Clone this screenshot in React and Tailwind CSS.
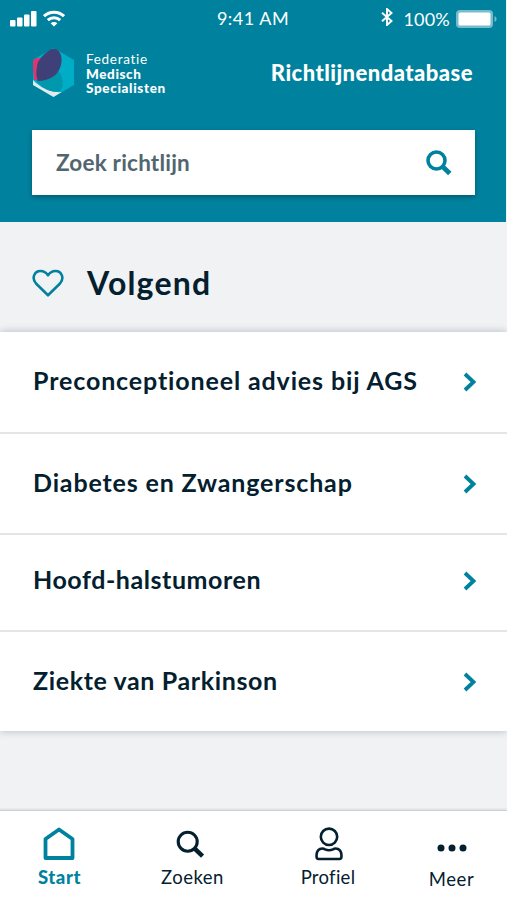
const guidelines = [
  { title: "Preconceptioneel advies bij AGS", row: "h-[102px]", label: "tracking-[0.87px]" },
  { title: "Diabetes en Zwangerschap", row: "h-[101px]", label: "tracking-[0.85px]" },
  { title: "Hoofd-halstumoren", row: "h-[97px] pb-[3px]", label: "tracking-[0.56px]" },
  { title: "Ziekte van Parkinson", row: "h-[99px]", label: "tracking-[0.62px]" },
];

function StatusBar() {
  return (
    <div className="grid h-[38px] grid-cols-[170px_1fr_170px] items-center text-[18px] leading-none text-white">
      <div className="flex items-center gap-[6px] pb-px pl-[10px]">
        <svg width="27" height="17" viewBox="0 0 27 17" fill="#fff">
          <rect x="0" y="10" width="5.5" height="6.5" rx="1" />
          <rect x="7" y="7.5" width="5.5" height="9" rx="1" />
          <rect x="14" y="4.5" width="5.5" height="12" rx="1" />
          <rect x="21" y="1" width="5.5" height="15.5" rx="1" />
        </svg>
        <svg width="22" height="17" viewBox="0 0 22 17" fill="none" stroke="#fff" strokeWidth="3">
          <path d="M1 6.2C6.6 .8 15.4 .8 21 6.2" />
          <path d="M4.8 10.2C8.4 6.9 13.6 6.9 17.2 10.2" />
          <path d="M11 16.5L7.6 13.2C9.5 11.5 12.5 11.5 14.4 13.2Z" fill="#fff" stroke="none" />
        </svg>
      </div>
      <div className="pb-[2px] text-center tracking-[0.5px] whitespace-nowrap">9:41 AM</div>
      <div className="flex items-center justify-end pr-[9px]">
        <svg width="12" height="18" viewBox="0 0 12 18" fill="none" stroke="#fff" strokeWidth="1.9" className="mb-1">
          <path d="M1 4.8L10.5 13L6 17V1L10.5 5L1 13.2" />
        </svg>
        <span className="ml-[10px] tracking-[0.2px]">100%</span>
        <svg width="41" height="18" viewBox="0 0 41 18" className="ml-[6px]">
          <rect x="0" y="0" width="37" height="18" rx="4" fill="#77bccb" />
          <rect x="2.5" y="2.5" width="32" height="13" rx="1.5" fill="#fff" />
          <path d="M38.5 6C41.3 7.5 41.3 10.5 38.5 12Z" fill="#77bccb" />
        </svg>
      </div>
    </div>
  );
}

function Logo() {
  return (
    <div className="flex items-center">
      <svg width="43" height="50" viewBox="0 0 43 50">
        <defs>
          <clipPath id="hexagon">
            <path d="M21.5 0L42 12V37L21.5 49L1 37V12Z" />
          </clipPath>
        </defs>
        <g clipPath="url(#hexagon)">
          <rect width="43" height="50" fill="#00adc7" />
          <path d="M0 31C8 40 19 45 30 44L21 50H0Z" fill="#e3e9ed" />
          <path d="M3 31C9 40 20 46 28 43C34 37 30 25 23 20Z" fill="#0098ac" />
          <path d="M0 10H12V32H2Z" fill="#d93672" />
        </g>
        <path d="M5 19C5 13 10 8 15 4C18 1 21 0 24 1C30 4 31 13 28 20C25 28 16 33 6 33C4 29 4 24 5 19Z" fill="#3f4077" />
      </svg>
      <div className="ml-[11px] pt-[2px] text-[13.5px] leading-[14.4px] whitespace-nowrap">
        <div className="tracking-[0.7px]">Federatie</div>
        <div className="font-black tracking-[0.6px]">Medisch</div>
        <div className="font-black tracking-[0.65px]">Specialisten</div>
      </div>
    </div>
  );
}

function SearchIcon({ size, stroke }) {
  return (
    <svg width={size} height={size} viewBox="0 0 26 26" fill="none" stroke="currentColor">
      <circle cx="10.5" cy="10.5" r="8.5" strokeWidth={stroke} />
      <path d="M17 17L23.8 23.5" strokeWidth={stroke + 1.2} />
    </svg>
  );
}

function TabItem({ label, className, children }) {
  return (
    <div className={`flex flex-col items-center ${className}`}>
      <div className="flex h-[36px] items-center">{children}</div>
      <span className="mt-[3px] text-[18.5px] leading-[24px] whitespace-nowrap">{label}</span>
    </div>
  );
}

export default function App() {
  return (
    <div className="h-[900px] w-[507px] overflow-hidden bg-[#f0f2f4] font-['Lato',sans-serif] text-[#04202f]">
      <header className="mr-px h-[222px] bg-[#00829e] text-white">
        <StatusBar />
        <div className="flex h-[92px] items-start justify-between pt-[10px] pr-[33px] pl-[32px]">
          <Logo />
          <h1 className="pt-[12px] text-[22px] leading-[26px] font-black tracking-[0.46px] whitespace-nowrap">Richtlijnendatabase</h1>
        </div>
        <div className="ml-[32px] flex h-[65px] w-[443px] items-center justify-between bg-white pr-[23px] pl-[24px] shadow-[0_2px_5px_rgba(0,30,45,0.4)]">
          <span className="pt-px text-[22.5px] font-bold tracking-[0.2px] text-[#52666f]">Zoek richtlijn</span>
          <span className="text-[#00829e]"><SearchIcon size={26} stroke={3.6} /></span>
        </div>
      </header>

      <section className="flex h-[110px] items-center pt-[11px] pl-[32px]">
        <svg width="32" height="28" viewBox="0 0 32 28" fill="none" stroke="#00829e" strokeWidth="2.6" strokeLinejoin="round">
          <path d="M16 26.3L4 14.5C-.5 9.5 2 2 8.5 2C12 2 14.5 4 16 6.2C17.5 4 20 2 23.5 2C30 2 32.5 9.5 28 14.5Z" />
        </svg>
        <h2 className="ml-[23px] text-[32px] leading-none font-bold tracking-[1.2px]">Volgend</h2>
      </section>

      <ul className="divide-y-2 divide-[#e3e6e8] bg-white shadow-[0_0_8px_rgba(0,20,30,0.25)]">
        {guidelines.map((item) => (
          <li key={item.title} className={`flex items-center justify-between pr-[30px] pl-[33px] ${item.row}`}>
            <span className={`pb-[3px] text-[25px] leading-none font-bold whitespace-nowrap ${item.label}`}>{item.title}</span>
            <svg width="14" height="20" viewBox="0 0 14 20" fill="none" stroke="#00829e" strokeWidth="3.8">
              <path d="M2 2L10.5 10L2 18" />
            </svg>
          </li>
        ))}
      </ul>

      <nav className="mt-[79px] flex h-[90px] border-t border-[#cdd1d4] bg-white pt-[15px] shadow-[0_-1px_2px_rgba(0,20,30,0.1)]">
        <TabItem label="Start" className="w-[119px] font-black tracking-[0.6px] text-[#00829e]">
          <svg width="32" height="34" viewBox="0 0 32 34" fill="none" stroke="currentColor" strokeWidth="3.8" strokeLinejoin="round" className="mr-[2px]">
            <path d="M2.5 12L16 2.5L29.5 12V31H2.5Z" />
          </svg>
        </TabItem>
        <TabItem label="Zoeken" className="w-[147px] tracking-[0.5px]">
          <span className="mr-[5px]"><SearchIcon size={29} stroke={2.8} /></span>
        </TabItem>
        <TabItem label="Profiel" className="w-[124px] tracking-[0.3px]">
          <svg width="28" height="34" viewBox="0 0 28 34" fill="none" stroke="currentColor" strokeWidth="2.6" strokeLinejoin="round" className="ml-[2px]">
            <circle cx="14" cy="9.8" r="8.2" />
            <path d="M3.5 32C1.5 32 1.5 30.5 1.5 29C1.5 20.5 8 21 10 22.3C12.5 23.5 15.5 23.5 18 22.3C20 21 26.5 20.5 26.5 29C26.5 30.5 26.5 32 24.5 32Z" />
          </svg>
        </TabItem>
        <TabItem label="Meer" className="w-[117px] pt-[2px] pl-[6px] tracking-[0.6px]">
          <svg width="30" height="8" viewBox="0 0 30 8" fill="currentColor" className="mt-[4px]">
            <circle cx="4" cy="4" r="3.5" />
            <circle cx="15" cy="4" r="3.5" />
            <circle cx="26" cy="4" r="3.5" />
          </svg>
        </TabItem>
      </nav>
    </div>
  );
}
